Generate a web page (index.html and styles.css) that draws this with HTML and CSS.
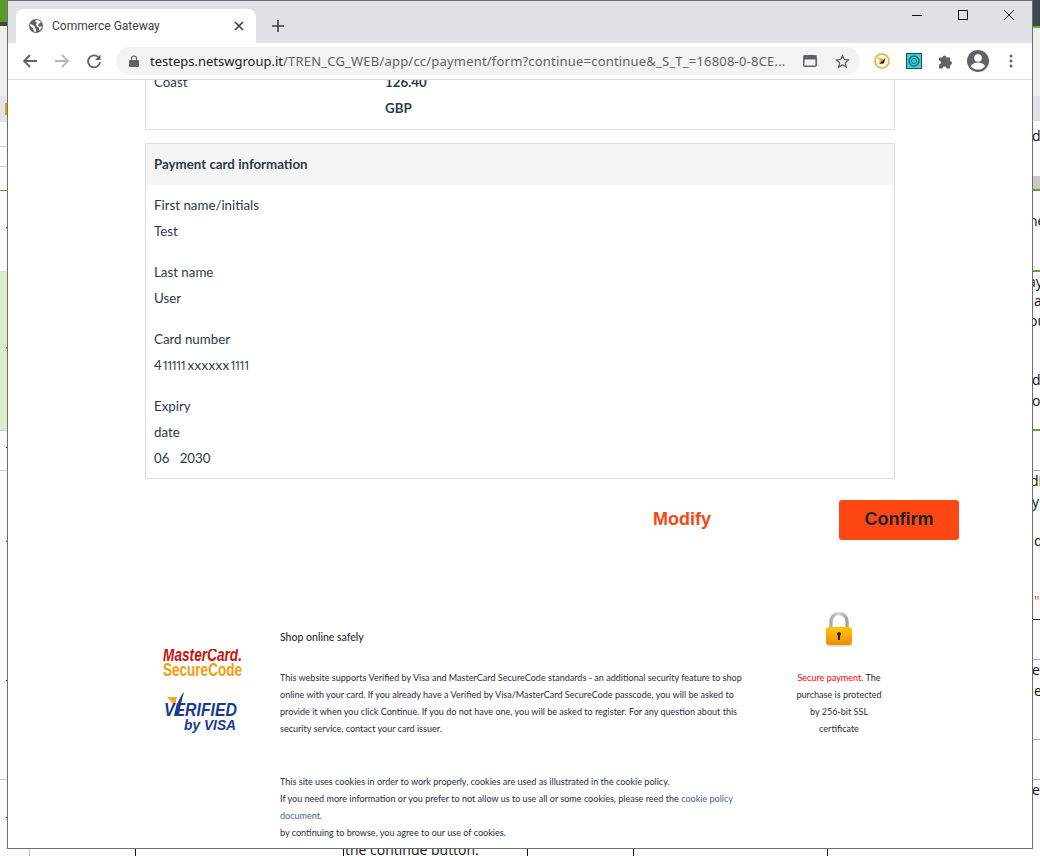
FILE: index.html
```html
<!DOCTYPE html>
<html lang="en">
<head>
	<meta charset="utf-8">
	<title>Commerce Gateway</title>
	<link rel="stylesheet" href="styles.css">
</head>
<body>
<div id="desktop">
	<!-- document in the window behind -->
	<div class="bg bg-top-green"></div>
	<div class="bg bg-top-dark"></div>
	<div class="bg bg-left-pale"></div>
	<div class="bg bg-grey"></div>
	<div class="bg bg-orange"></div>
	<div class="bg bg-line l146"></div>
	<div class="bg bg-line l166"></div>
	<div class="bg bg-gline l190"></div>
	<div class="bg bg-lgreen"></div>
	<div class="bg bg-line l430"></div>
	<div class="bg bg-line l470"></div>
	<div class="bg bg-line l779"></div>
	<div class="bg tick-mark m1"></div>
	<div class="bg tick-mark m2"></div>
	<div class="bg tick-mark m3"></div>
	<div class="bg tick-mark m4"></div>
	<div class="bg tick-mark m5"></div>
	<div class="bg tick-mark m6"></div>
	<div class="bg bg-rtop"></div>
	<div class="bg bg-rgreen r0"></div>
	<div class="bg bg-rpale"></div>
	<div class="bg bg-rgrey"></div>
	<div class="bg bg-rband"></div>
	<div class="bg bg-rgreen r1"></div>
	<div class="bg bg-rgreen r2"></div>
	<div class="bg bg-rgreen r3"></div>
	<div class="bg bg-rline r4"></div>
	<div class="bg bg-rblack r5"></div>
	<div class="bg bg-rline r6"></div>
	<div class="bg bg-rline r7"></div>
	<div class="bg bg-rline r8"></div>
	<div class="bg bg-bottom"></div>
	<div class="bg col c1"></div>
	<div class="bg col c2"></div>
	<div class="bg col c3"></div>
	<div class="bg col c4"></div>
	<div class="bg col c5"></div>
	<div class="bg col c6"></div>
	<span class="behind t1">d</span>
	<span class="behind t2">ne</span>
	<span class="behind t3">ay</span>
	<span class="behind t4">a</span>
	<span class="behind t5">ou</span>
	<span class="behind t6">d</span>
	<span class="behind t7">o</span>
	<span class="behind t8">di</span>
	<span class="behind t9">y</span>
	<span class="behind t10">d</span>
	<span class="behind t11">e</span>
	<span class="behind t12">e</span>
	<span class="behind t13">e</span>
	<span class="behind t14">the continue button.</span>
	<span class="behind t15">"</span>

	<div id="window">
		<div class="tabstrip">
			<div class="tab">
				<svg class="favicon" width="16" height="16" viewBox="0 0 16 16"><circle cx="8" cy="8" r="7" fill="#5f6368"/><path d="M2 6l3 1 2 2v1l1 1v3l-2-.5-1-3-3-3zM8 2l3 .5 2 2-2 1-1 2 1 1h3l-1 2.500-2 1.500v-3l-2-1-1-2 1-2-2-1z" fill="#fff"/></svg>
				<span class="tab-title">Commerce Gateway</span>
				<svg class="tab-close" width="10" height="10" viewBox="0 0 10 10"><path d="M1 1l8 8M9 1l-8 8" stroke="#3c4043" stroke-width="1.700"/></svg>
			</div>
			<svg class="newtab" width="12" height="12" viewBox="0 0 12 12"><path d="M6 0v12M0 6h12" stroke="#3c4043" stroke-width="1.600"/></svg>
			<div class="wincontrols">
				<svg width="10" height="10" viewBox="0 0 10 10"><path d="M0 5.500h10" stroke="#111"/></svg>
				<svg width="10" height="10" viewBox="0 0 10 10"><rect x=".5" y=".5" width="9" height="9" fill="none" stroke="#111"/></svg>
				<svg width="10" height="10" viewBox="0 0 10 10"><path d="M0 0l10 10M10 0l-10 10" stroke="#111" stroke-width=".9"/></svg>
			</div>
		</div>
		<div class="toolbar">
			<svg class="navicon" width="16" height="16" viewBox="0 0 16 16"><path d="M15 8H2M8 2L2 8l6 6" fill="none" stroke="#5f6368" stroke-width="1.800"/></svg>
			<svg class="navicon" width="16" height="16" viewBox="0 0 16 16"><path d="M1 8h13M8 2l6 6-6 6" fill="none" stroke="#b4b7bb" stroke-width="1.800"/></svg>
			<svg class="navicon" width="16" height="16" viewBox="0 0 16 16"><path d="M13 5a6 6 0 1 0 1 4" fill="none" stroke="#5f6368" stroke-width="1.800"/><path d="M14.500 1.500v5.500H9z" fill="#5f6368"/></svg>
			<div class="omnibox">
				<svg class="lock-small" width="10" height="12" viewBox="0 0 10 12"><path d="M1 5h8a1 1 0 0 1 1 1v5a1 1 0 0 1-1 1H1a1 1 0 0 1-1-1V6a1 1 0 0 1 1-1z" fill="#5f6368"/><path d="M2.500 5V3.500a2.500 2.500 0 0 1 5 0V5" fill="none" stroke="#5f6368" stroke-width="1.200"/></svg>
				<span class="url"><b>testeps.netswgroup.it</b>/TREN_CG_WEB/app/cc/payment/form?continue=continue&amp;_S_T_=16808-0-8CE...</span>
				<svg class="omni-tab" width="14" height="12" viewBox="0 0 14 12"><rect x=".8" y=".8" width="12.400" height="10.400" rx="1" fill="none" stroke="#5f6368" stroke-width="1.500"/><rect x="1" y="1" width="12" height="3.500" fill="#5f6368"/></svg>
				<svg class="omni-star" width="15" height="15" viewBox="0 0 15 15"><path d="M7.500 1.500l1.800 4 4.300.4-3.300 2.900 1 4.300-3.800-2.300-3.800 2.300 1-4.300L1.400 5.900l4.300-.4z" fill="none" stroke="#5f6368" stroke-width="1.300"/></svg>
			</div>
			<div class="extensions">
				<svg width="16" height="16" viewBox="0 0 16 16"><circle cx="8" cy="8" r="7" fill="#fff" stroke="#f9a825" stroke-width="1.600"/><path d="M3 4l9 3-4 1 3 4-5-3-2 2 2-4z" fill="#f9a825"/><path d="M11.500 5L5 11l4-.5 1-1z" fill="#222"/></svg>
				<svg width="16" height="16" viewBox="0 0 16 16"><rect x=".5" y=".5" width="15" height="15" fill="#3fd0d8" stroke="#1c4a55"/><circle cx="8" cy="8" r="5" fill="none" stroke="#1c6a7a" stroke-width="1.500"/><circle cx="8" cy="8" r="2.500" fill="none" stroke="#1c6a7a"/></svg>
				<svg width="16" height="16" viewBox="0 0 16 16"><path d="M1 4.500h3.500a2 2 0 0 1 4 0H12v3.500a2 2 0 0 1 0 4V15.500H8.500a2 2 0 0 0-4 0H1v-4a2 2 0 0 0 0-4z" fill="#5f6368"/></svg>
				<svg class="avatar" width="22" height="22" viewBox="0 0 22 22"><circle cx="11" cy="11" r="11" fill="#5f6368"/><circle cx="11" cy="8" r="3.800" fill="#fff"/><path d="M3.800 16c1.500-2.500 4.500-3.500 7.200-3.500s5.700 1 7.200 3.500a9 9 0 0 1-14.400 0z" fill="#fff"/></svg>
				<svg class="kebab" width="4" height="14" viewBox="0 0 4 14"><circle cx="2" cy="2" r="1.500" fill="#5f6368"/><circle cx="2" cy="7" r="1.500" fill="#5f6368"/><circle cx="2" cy="12" r="1.500" fill="#5f6368"/></svg>
			</div>
		</div>

		<div class="viewport">
			<div class="box box-scrolled">
				<div class="summary">
					<div class="row"><span class="lbl">Coast</span><b>126.40</b></div>
					<div class="row"><span class="lbl"></span><b>GBP</b></div>
				</div>
			</div>

			<div class="box">
				<h2>Payment card information</h2>
				<div class="fields">
					<div class="field"><p>First name/initials</p><p>Test</p></div>
					<div class="field"><p>Last name</p><p>User</p></div>
					<div class="field"><p>Card number</p><p>4<span class="ones">11111</span><span class="masked">xxxxxx</span><span class="ones">1111</span></p></div>
					<div class="field"><p>Expiry</p><p>date</p><p>06 &nbsp; 2030</p></div>
				</div>
			</div>

			<div class="actions">
				<a class="modify">Modify</a>
				<a class="confirm">Confirm</a>
			</div>

			<div class="footer">
				<div class="logos">
					<svg width="84" height="86" viewBox="0 0 84 86">
						<text class="logo-mc" x="1" y="12" textLength="79" lengthAdjust="spacingAndGlyphs">MasterCard.</text>
						<text class="logo-sc" x="1" y="27" textLength="79" lengthAdjust="spacingAndGlyphs">SecureCode</text>
						<path d="M5 48h10l-2 9z" fill="#f7a823"/>
						<path d="M22 43C17 49 14 57 12 67h5C18 58 20 50 22 43z" fill="#1a3a8f"/>
						<text class="logo-ver" x="2" y="67" textLength="73" lengthAdjust="spacingAndGlyphs">VERIFIED</text>
						<text class="logo-by" x="22" y="81" textLength="52" lengthAdjust="spacingAndGlyphs">by VISA</text>
					</svg>
				</div>
				<div class="about">
					<h3>Shop online safely</h3>
					<p>This website supports Verified by Visa and MasterCard SecureCode standards - an additional security feature to shop online with your card. If you already have a Verified by Visa/MasterCard SecureCode passcode, you will be asked to provide it when you click Continue. If you do not have one, you will be asked to register. For any question about this security service, contact your card issuer.</p>
					<p class="cookies">This site uses cookies in order to work properly, cookies are used as illustrated in the cookie policy.<br>If you need more information or you prefer to not allow us to use all or some cookies, please reed the <a>cookie policy document.</a><br>by continuing to browse, you agree to our use of cookies.</p>
				</div>
				<div class="secure">
					<svg class="padlock" width="30" height="36" viewBox="0 0 30 36">
						<defs>
							<linearGradient id="gold" x1="0" y1="0" x2="0" y2="1"><stop offset="0" stop-color="#ffc800"/><stop offset="1" stop-color="#ef8a06"/></linearGradient>
							<linearGradient id="steel" x1="0" y1="0" x2="1" y2="0"><stop offset="0" stop-color="#a9a9a9"/><stop offset=".5" stop-color="#d8d8d8"/><stop offset="1" stop-color="#a0a0a0"/></linearGradient>
						</defs>
						<ellipse cx="15" cy="33.500" rx="14" ry="1.500" fill="#ddd"/>
						<path d="M7 17V9.500a8 8 0 0 1 16 0V17" fill="none" stroke="url(#steel)" stroke-width="3.400"/>
						<rect x="2" y="15" width="26" height="18" rx="3" fill="url(#gold)"/>
						<circle cx="15" cy="22" r="2" fill="#222"/>
						<rect x="14" y="22" width="2" height="6" fill="#222"/>
					</svg>
					<p><span class="red">Secure payment.</span> The purchase is protected by 256-bit SSL certificate</p>
				</div>
			</div>
		</div>
	</div>
</div>
</body>
</html>
```

FILE: styles.css
```css
html, body { margin: 0; padding: 0; }
#desktop {
	position: relative;
	width: 1040px;
	height: 856px;
	overflow: hidden;
	background-color: #fafafa;
}

/* the page behind the window */
.bg { position: absolute; }
.bg-top-green { left: 0; top: 0; width: 8px; height: 22px; background-color: #5a9a2c; }
.bg-top-dark { left: 0; top: 22px; width: 8px; height: 4px; background-color: #3d4a35; }
.bg-left-pale { left: 0; top: 26px; width: 8px; height: 70px; background-color: #eeeeee; }
.bg-grey { left: 0; top: 96px; width: 8px; height: 26px; background-color: #e4e4e8; }
.bg-orange { left: 5px; top: 103px; width: 3px; height: 12px; background-color: #e0a010; }
.bg-line { left: 0; width: 8px; height: 1px; background-color: #d0d0d0; }
.l146 { top: 146px; }
.l166 { top: 166px; }
.l430 { top: 430px; }
.l470 { top: 470px; }
.l779 { top: 779px; }
.bg-gline { left: 0; width: 8px; height: 1px; background-color: #5a9a2c; }
.l190 { top: 190px; }
.bg-lgreen { left: 0; top: 271px; width: 8px; height: 159px; background-color: #d9edc8; }
.tick-mark { left: 6px; width: 2px; height: 1px; background-color: #333; }
.m1 { top: 227px; }
.m2 { top: 347px; }
.m3 { top: 447px; }
.m4 { top: 541px; }
.m5 { top: 680px; }
.m6 { top: 817px; }
.bg-rtop { left: 1033px; top: 0; width: 7px; height: 26px; background-color: #3f4850; }
.bg-rpale { left: 1033px; top: 28px; width: 7px; height: 68px; background-color: #eeeeee; }
.bg-rgrey { left: 1033px; top: 96px; width: 7px; height: 25px; background-color: #e2e2e6; }
.bg-rband { left: 1033px; top: 176px; width: 7px; height: 13px; background-color: #c8c8c8; }
.bg-rgreen { left: 1033px; width: 7px; height: 2px; background-color: #6a9a3a; }
.r0 { top: 26px; background-color: #6ab02c; }
.r1 { top: 189px; }
.r2 { top: 270px; }
.r3 { top: 429px; }
.bg-rline { left: 1033px; width: 7px; height: 1px; background-color: #aaa; }
.r4 { top: 470px; }
.bg-rblack { left: 1033px; top: 619px; width: 7px; height: 1px; background-color: #222; }
.r6 { top: 659px; }
.r7 { top: 739px; }
.r8 { top: 779px; }
.bg-bottom { left: 30px; top: 849px; width: 1010px; height: 7px; background-color: #fff; }
.col { top: 848px; width: 1px; height: 8px; background-color: #111; }
.c1 { left: 29px; background-color: #c8c8c8; }
.c2 { left: 135px; }
.c3 { left: 343px; }
.c4 { left: 527px; }
.c5 { left: 633px; }
.c6 { left: 827px; }
.behind {
	position: absolute;
	font-family: "Open Sans", sans-serif;
	font-size: 14px;
	line-height: 18px;
	color: #111;
	white-space: nowrap;
}
.t1 { left: 1032px; top: 127px; }
.t2 { left: 1029px; top: 212px; }
.t3 { left: 1028px; top: 273px; }
.t4 { left: 1034px; top: 292px; }
.t5 { left: 1029px; top: 312px; }
.t6 { left: 1032px; top: 371px; }
.t7 { left: 1032px; top: 392px; }
.t8 { left: 1030px; top: 472px; }
.t9 { left: 1032px; top: 493px; }
.t10 { left: 1034px; top: 532px; }
.t11 { left: 1032px; top: 661px; }
.t12 { left: 1034px; top: 682px; }
.t13 { left: 1032px; top: 781px; }
.t14 { left: 345px; top: 841px; }
.t15 { left: 1034px; top: 592px; color: #b05a10; }

/* browser window */
#window {
	position: absolute;
	left: 7px;
	top: 0;
	width: 1024px;
	height: 847px;
	border: 1px solid #6e6e6e;
	background-color: white;
	display: flex;
	flex-direction: column;
	overflow: hidden;
}
.tabstrip {
	height: 42px;
	flex: none;
	background-color: #dee1e6;
	display: flex;
	align-items: flex-start;
}
.tab {
	width: 240px;
	height: 34px;
	margin: 8px 0 0 8px;
	background-color: white;
	border-radius: 8px 8px 0 0;
	display: flex;
	align-items: center;
	box-sizing: border-box;
	padding: 0 12px 0 12px;
	font-family: "Roboto", sans-serif;
	font-size: 12px;
	color: #3c4043;
}
.tab-title { margin-left: 8px; flex: 1; }
.newtab { margin: 19px 0 0 16px; }
.wincontrols {
	margin: 9px 0 0 auto;
	display: flex;
	gap: 36px;
	padding-right: 18px;
}
.toolbar {
	height: 36px;
	flex: none;
	background-color: white;
	border-bottom: 1px solid #dadce0;
	display: flex;
	align-items: center;
	padding-left: 14px;
}
.navicon { margin-right: 16px; }
.omnibox {
	width: 744px;
	height: 28px;
	margin-left: -2px;
	box-sizing: border-box;
	background-color: #f1f3f4;
	border-radius: 14px;
	display: flex;
	align-items: center;
	padding-left: 13px;
	font-family: "Noto Sans", sans-serif;
	font-size: 13px;
	color: #5f6368;
	flex: none;
}
.url { margin-left: 11px; width: 637px; white-space: nowrap; overflow: hidden; letter-spacing: .2px; }
.url b { font-weight: normal; color: #202124; letter-spacing: 0; }
.omni-tab { margin-left: 16px; }
.omni-star { margin-left: 18px; }
.extensions {
	display: flex;
	align-items: center;
	margin-left: 14px;
	gap: 16px;
}
.avatar { margin-left: -3px; }
.kebab { margin-left: 4px; }

/* page */
.viewport {
	flex: 1;
	overflow: hidden;
	font-family: "Lato", sans-serif;
	font-size: 13.300px;
	color: #2c3a48;
}
.box {
	width: 748px;
	margin: 13px 0 0 137px;
	border: 1px solid #dcdcdc;
}
.box-scrolled { margin-top: -12px; padding-bottom: 8px; }
.row { display: flex; line-height: 26px; height: 26px; }
.lbl { width: 231px; padding-left: 8px; }
.row b { font-weight: 700; }
.box h2 {
	margin: 0;
	height: 41px;
	line-height: 41px;
	padding-left: 8px;
	font-size: 13.300px;
	font-weight: 700;
	background-color: #f5f5f5;
}
.fields { padding: 7px 8px 7px; }
.field { margin-bottom: 15px; }
.field:last-child { margin-bottom: 0; }
.field p { margin: 0; line-height: 26px; }
.ones { font-family: "Open Sans", sans-serif; font-size: 13px; letter-spacing: -2.900px; }
.masked { letter-spacing: .4px; margin-left: 3px; margin-right: 0; }
.actions {
	display: flex;
	justify-content: flex-end;
	align-items: center;
	gap: 128px;
	margin: 21px 73px 0 0;
	font-family: "Liberation Sans", sans-serif;
	font-size: 18px;
	font-weight: bold;
}
.modify { color: #fc4512; margin-top: -2px; }
.confirm {
	width: 120px;
	height: 40px;
	line-height: 38px;
	text-align: center;
	border-radius: 3px;
	background-color: #ff4713;
	color: #1c2430;
}
.footer {
	display: flex;
	margin: 89px 0 0 154px;
	font-size: 9.050px;
	line-height: 17px;
	color: #1f2d3a;
}
.logos { width: 118px; flex: none; padding-top: 20px; }
.logos text { font-family: "Liberation Sans", sans-serif; font-weight: bold; }
.logo-mc { font-size: 18px; font-style: italic; fill: #c5140e; }
.logo-sc { font-size: 18px; fill: #f79a0e; }
.logo-ver { font-size: 18px; font-style: italic; fill: #1a3a8f; }
.logo-by { font-size: 15px; font-style: italic; fill: #1a3a8f; }
.about { width: 467px; flex: none; }
.about h3 { margin: 0 0 23px; font-size: 10.500px; font-weight: 500; line-height: 17px; }
.about p { margin: 0; }
.about .cookies { margin-top: 36px; }
.about a { color: #3d5fa0; }
.secure { width: 96px; margin-left: 44px; text-align: center; margin-top: -17px; }
.padlock { display: block; margin: 0 auto; }
.secure p { margin: 21px 0 0; }
.red { color: #f00; }
```
